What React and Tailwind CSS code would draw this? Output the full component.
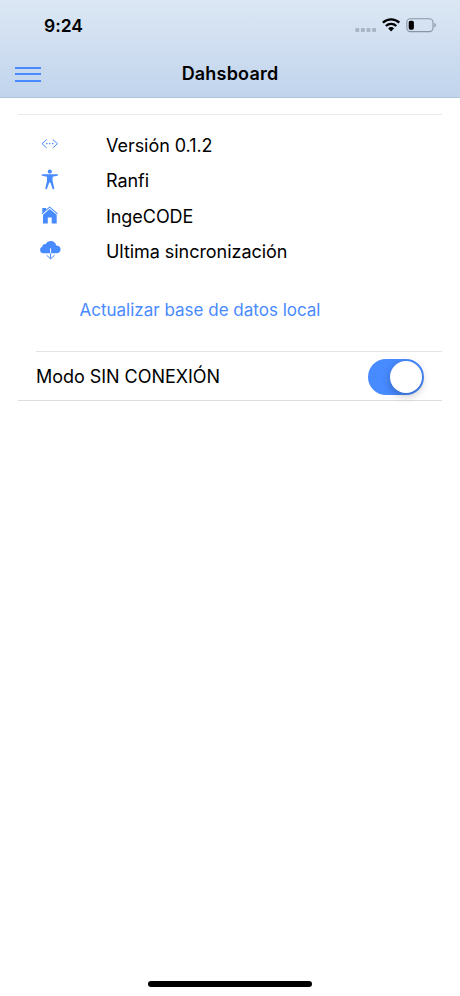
const ROWS = [
  { icon: CodeIcon, label: 'Versión 0.1.2' },
  { icon: BodyIcon, label: 'Ranfi' },
  { icon: HomeIcon, label: 'IngeCODE' },
  { icon: CloudIcon, label: 'Ultima sincronización' },
];

function CodeIcon() {
  return (
    <svg width="24" height="24" viewBox="0 0 24 24" fill="none" stroke="currentColor" aria-hidden="true">
      <path d="M8.700 6.500 4 10.700l4.700 4.200M14.800 6.500l4.700 4.200-4.700 4.200" strokeWidth="1" />
      <path d="M8.100 10.700h1.400M11.050 10.700h1.400M14 10.700h1.400" strokeWidth="1.300" />
    </svg>
  );
}

function BodyIcon() {
  return (
    <svg width="24" height="24" viewBox="0 0 24 24" fill="currentColor" aria-hidden="true">
      <circle cx="11.800" cy="2.600" r="2.100" />
      <path d="M4.300 5.200h15a.8.8 0 0 1 0 1.600l-4.700.9v4.300l1.700 7.300a.9.9 0 0 1-1.700.5l-2.300-6.400h-1l-2.300 6.400a.9.9 0 0 1-1.700-.5l1.700-7.300V7.700l-4.700-.9a.8.8 0 0 1 0-1.600z" />
    </svg>
  );
}

function HomeIcon() {
  return (
    <svg width="24" height="24" viewBox="0 0 24 24" fill="currentColor" aria-hidden="true">
      <path d="M11.700 5.100 5 10.700V19.500H9.800v-5.900h3.900v5.900h5v-8.800z" />
      <path d="M11.700 2.500 8 5.600V3.900H4.300v4.900L3.500 9.500l.6.8 7.600-6.500 7.600 6.500.6-.8z" />
    </svg>
  );
}

function CloudIcon() {
  return (
    <svg width="24" height="24" viewBox="0 0 24 24" aria-hidden="true">
      <path
        fill="currentColor"
        d="M18.200 5.500C17.600 2.700 15.500 1 12.800 1c-2.200 0-4.100 1.300-5 3.100C5.400 3.900 4.400 5.300 4.200 6.800 2.800 7.300 2.100 8.500 2.100 9.900c0 2.100 1.600 3.400 3.700 3.400h12.700c2.300 0 4.100-1.600 4.100-4 0-2.200-1.900-3.800-4.400-3.800z"
      />
      <path fill="none" stroke="#fff" strokeWidth="1" d="M12.600 8.300v5" />
      <path fill="none" stroke="currentColor" strokeWidth="1" d="M12.600 13.300v5.600M8.600 15.200l4 3.700 4-3.700" />
    </svg>
  );
}

function StatusIcons() {
  return (
    <svg width="82" height="18" viewBox="0 0 82 18" aria-hidden="true">
      <g fill="#a9b5c2">
        <rect x="1.300" y="12" width="4" height="4" rx=".9" />
        <rect x="6.900" y="12" width="4" height="4" rx=".9" />
        <rect x="12.500" y="12" width="4" height="4" rx=".9" />
        <rect x="18.100" y="12" width="4" height="4" rx=".9" />
      </g>
      <g fill="none" stroke="#000" strokeWidth="2.300">
        <path d="M28.900 6.700a11.900 11.900 0 0 1 16.400 0" />
        <path d="M31.900 10a7.600 7.600 0 0 1 10.400 0" />
      </g>
      <path d="M34.100 12.300a4.500 4.500 0 0 1 6 0l-3 3.100z" />
      <rect x="52.800" y="2.800" width="26.200" height="12.800" rx="3.600" fill="none" stroke="#8995a2" strokeWidth="1.100" />
      <rect x="54.700" y="4.700" width="5.200" height="9" rx="1.700" />
      <path fill="#8995a2" d="M80.300 7.100c2 .7 2 3.700 0 4.400z" />
    </svg>
  );
}

export default function App() {
  return (
    <div className="relative h-[996px] w-[460px] overflow-hidden bg-white font-['Inter',sans-serif] text-[18px] text-black">
      <header className="h-[98px] border-b border-[#b1c2d9] bg-linear-to-b from-[#dbe7f3] via-[#cfdef1] to-[#c0d4ec]">
        <div className="flex h-[50px] items-center justify-between pl-11 pr-[24px]">
          <span className="pt-[3px] text-[17.500px] font-semibold tracking-[-0.050px]">9:24</span>
          <StatusIcons />
        </div>
        <div className="grid h-[47px] grid-cols-[1fr_auto_1fr] items-center">
          <button type="button" aria-label="Menu" className="ml-[14.700px] mt-px flex w-[26px] flex-col gap-[4.500px]">
            <span className="h-[2px] bg-[#488aff]" />
            <span className="h-[2px] bg-[#488aff]" />
            <span className="h-[2px] bg-[#488aff]" />
          </button>
          <h1 className="text-[18px] font-semibold tracking-[0.200px]">Dahsboard</h1>
        </div>
      </header>

      <main className="px-[18px] pt-4">
        <section className="border-t border-[#e9e9e9] pt-[12.500px]">
          <ul>
            {ROWS.map(({ icon: Icon, label }) => (
              <li key={label} className="flex h-[35.500px] items-center pl-5">
                <span className="w-[68px] text-[#488aff]">
                  <Icon />
                </span>
                <span className="tracking-[-0.050px]">{label}</span>
              </li>
            ))}
          </ul>
          <button
            type="button"
            className="mt-[25.500px] h-[32px] w-full pr-[60px] text-center text-[17px] text-[#488aff]"
          >
            Actualizar base de datos local
          </button>
        </section>

        <section className="mt-[24.400px] border-b border-[#dedede]">
          <div className="ml-[18px] flex h-[49px] items-center justify-between border-t border-[#e4e4e4] pr-[17.700px]">
            <span className="pt-px tracking-[-0.040px]">Modo SIN CONEXIÓN</span>
            <button
              type="button"
              role="switch"
              aria-checked="true"
              aria-label="Modo SIN CONEXIÓN"
              className="mt-px flex h-[36px] w-[56.600px] items-center justify-end rounded-full bg-[#488aff] pr-[2px]"
            >
              <span className="size-[32px] rounded-full bg-white shadow-[0_3px_9px_rgba(0,0,0,0.25)]" />
            </button>
          </div>
        </section>
      </main>

      <div className="absolute bottom-[9px] left-[148px] h-[6px] w-[164px] rounded-full bg-black" />
    </div>
  );
}
